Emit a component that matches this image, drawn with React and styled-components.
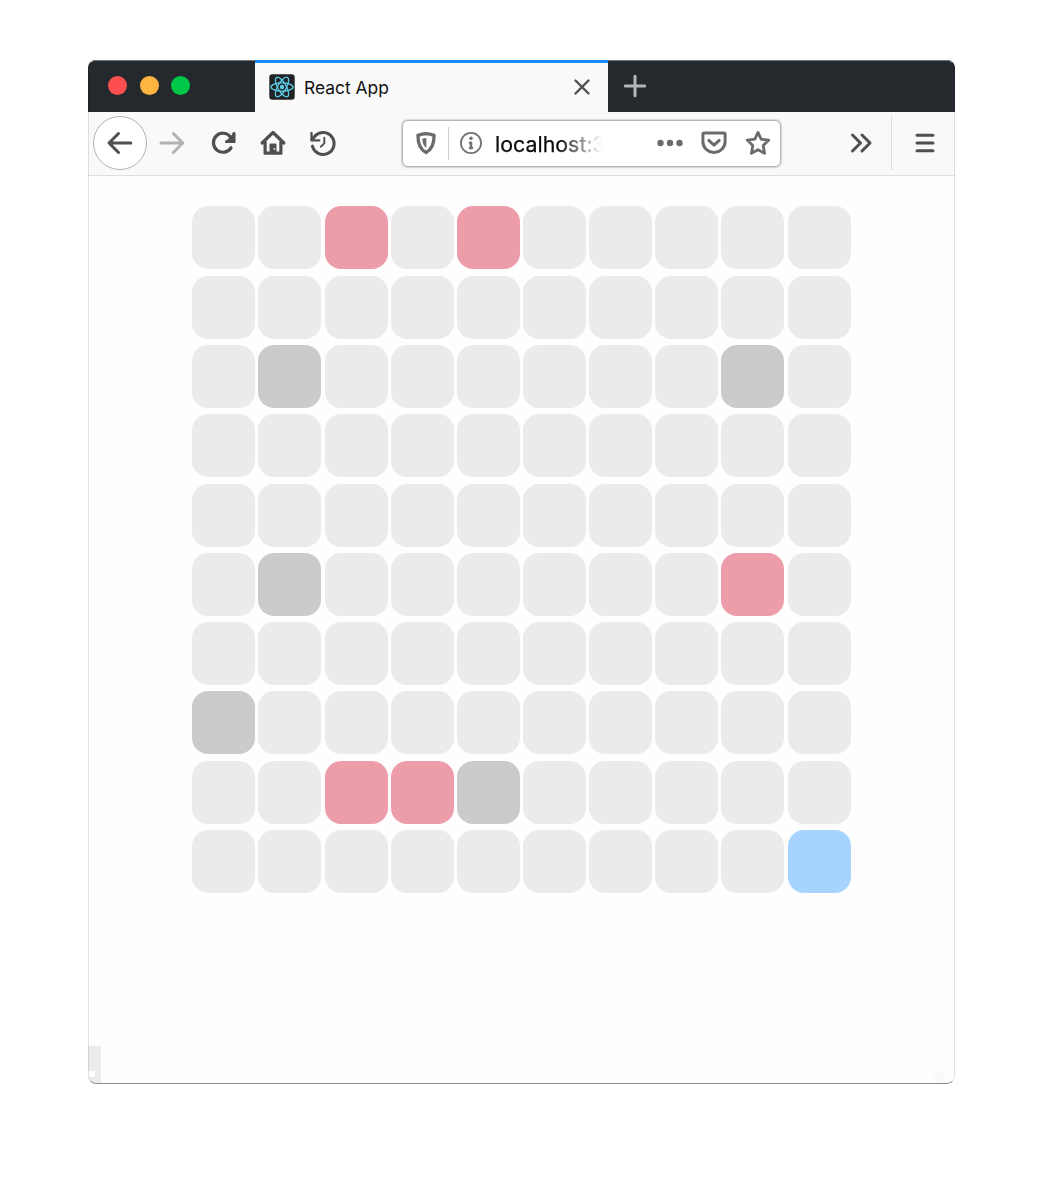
import React from "react";
import styled, { createGlobalStyle } from "styled-components";

const GlobalStyle = createGlobalStyle`
  *, *::before, *::after { box-sizing: border-box; }
  body { margin: 0; background: #fff; font-family: Inter, "Liberation Sans", sans-serif; }
`;

const Page = styled.main`
  height: 1200px;
  padding: 60px 88px 0;
`;

const Window = styled.section`
  position: relative;
  display: flex;
  flex-direction: column;
  width: 867px;
  height: 1024px;
  border-radius: 8px;
  overflow: hidden;
  background: #fefefe;

  &::after {
    content: "";
    position: absolute;
    inset: 0;
    border: 1px solid rgba(0, 0, 0, 0.11);
    border-top-color: #6f7476;
    border-bottom-color: #8c8c8c;
    border-radius: 8px;
    pointer-events: none;
  }
`;

const TabBar = styled.header`
  display: flex;
  flex: none;
  height: 52px;
  background: #24292d;
`;

const Lights = styled.div`
  display: flex;
  align-items: center;
  gap: 12.5px;
  width: 167px;
  padding: 0 0 1px 20px;
`;

const Light = styled.span`
  width: 19px;
  height: 19px;
  border-radius: 50%;
  background: ${(p) => p.$color};
`;

const Tab = styled.div`
  position: relative;
  z-index: 1;
  display: flex;
  align-items: center;
  width: 353px;
  padding: 0 10.5px 2px 14px;
  border-top: 3px solid #1c8bfa;
  background: #f9f9fa;
`;

const TabTitle = styled.span`
  flex: 1;
  margin: 2px 0 0 9px;
  font-size: 17.4px;
  line-height: 24px;
  color: #111;
`;

const NewTab = styled.div`
  display: flex;
  align-items: center;
  margin-left: 11px;
`;

const Toolbar = styled.nav`
  display: flex;
  flex: none;
  align-items: center;
  height: 64px;
  padding: 0 0 1px 5px;
  border-bottom: 1px solid #dfdfe0;
  background: #f9f9fa;
`;

const BackButton = styled.div`
  display: grid;
  flex: none;
  place-items: center;
  width: 54px;
  height: 54px;
  border: 1px solid #b3b3b3;
  border-radius: 50%;
  background: #fff;
`;

const ToolButton = styled.div`
  display: grid;
  flex: none;
  place-items: center;
  width: ${(p) => p.$width || 50}px;
`;

const UrlBar = styled.div`
  display: flex;
  flex: none;
  align-items: center;
  width: 379px;
  height: 47px;
  margin: 1px 55px 0 54px;
  padding: 0 0 1px 6.5px;
  border: 1px solid #b6b6b7;
  border-radius: 6px;
  background: #fff;
  box-shadow: 0 0 1px 0.5px rgba(0, 0, 0, 0.12), 0 1px 4px rgba(0, 0, 0, 0.05);
`;

const Divider = styled.span`
  flex: none;
  width: 1px;
  height: ${(p) => p.$height}px;
  margin: ${(p) => p.$margin};
  background: ${(p) => p.$color};
`;

const Address = styled.span`
  flex: none;
  width: 120px;
  margin: 2px 39px 0 1.5px;
  font-size: 21.4px;
  line-height: 30px;
  white-space: nowrap;
  color: #0c0c0d;
  -webkit-text-stroke: 0.25px currentColor;
  mask-image: linear-gradient(to right, #000 64px, transparent 107px);
`;

const Content = styled.div`
  position: relative;
  flex: 1;
  padding: 30.4px 0 0 104.3px;
`;

const Board = styled.div`
  display: grid;
  grid-template-columns: repeat(10, 63px);
  grid-auto-rows: 63px;
  gap: 6.3px 3.15px;
`;

const cellColors = { empty: "#ebebeb", wall: "#cbcbcb", pink: "#ed9daa", blue: "#a6d3ff" };

const Cell = styled.div`
  border-radius: 16px;
  background: ${(p) => cellColors[p.$kind]};
`;

const Status = styled.div`
  position: absolute;
  left: 0;
  bottom: 0;
  width: 13px;
  height: 38px;
  background: #ebebeb;

  &::after {
    content: "";
    position: absolute;
    left: 0;
    bottom: 7px;
    width: 7px;
    height: 6px;
    background: #fefefe;
  }
`;

const Grip = styled.div`
  position: absolute;
  right: 10px;
  bottom: 1px;
  width: 12px;
  height: 12px;
  background: #fafafa;
`;

const Glyph = styled.svg`
  display: block;
  flex: none;
  width: ${(p) => p.$size || 32}px;
  height: ${(p) => p.$size || 32}px;
  fill: none;
  stroke: ${(p) => p.$color || "#4f4f50"};
  stroke-width: ${(p) => p.$weight || 3};
  stroke-linecap: round;
  stroke-linejoin: round;
`;

function Icon({ children, ...rest }) {
  return (
    <Glyph viewBox="0 0 32 32" aria-hidden="true" {...rest}>
      {children}
    </Glyph>
  );
}

function ReactLogo() {
  return (
    <Glyph viewBox="0 0 26 26" $size={26} $color="#5fcde6" $weight={1.3} aria-hidden="true">
      <rect x="0.3" y="0.3" width="25.4" height="25.4" rx="3" fill="#202326" stroke="none" />
      <ellipse cx="13" cy="13" rx="11" ry="4.2" />
      <ellipse cx="13" cy="13" rx="11" ry="4.2" transform="rotate(60 13 13)" />
      <ellipse cx="13" cy="13" rx="11" ry="4.2" transform="rotate(120 13 13)" />
      <circle cx="13" cy="13" r="2.2" fill="#5fcde6" stroke="none" />
    </Glyph>
  );
}

const special = {
  2: "pink", 4: "pink", 21: "wall", 28: "wall", 51: "wall", 58: "pink",
  70: "wall", 82: "pink", 83: "pink", 84: "wall", 99: "blue",
};
const cells = Array.from({ length: 100 }, (_, i) => special[i] || "empty");

export default function App() {
  return (
    <Page>
      <GlobalStyle />
      <Window>
        <TabBar>
          <Lights>
            <Light $color="#fd4f50" />
            <Light $color="#fdb441" />
            <Light $color="#00c748" />
          </Lights>
          <Tab>
            <ReactLogo />
            <TabTitle>React App</TabTitle>
            <Icon $weight={2.4}>
              <path d="M9.5 9.5 22.5 22.5M22.5 9.5 9.5 22.5" />
            </Icon>
          </Tab>
          <NewTab>
            <Icon $color="#b4b7b9" $weight={3}>
              <path d="M16 6.3v19.4M6.3 16h19.4" />
            </Icon>
          </NewTab>
        </TabBar>
        <Toolbar>
          <BackButton>
            <Icon>
              <path d="M26.8 16H5.5M14.5 6.5 5 16l9.5 9.5" />
            </Icon>
          </BackButton>
          <ToolButton>
            <Icon $color="#b2b2b3">
              <path d="M5 16h21.5M17.3 6.5l9.5 9.5-9.5 9.5" />
            </Icon>
          </ToolButton>
          <ToolButton $width={51}>
            <Icon $weight={3.2}>
              <path d="M24 20.8A9.5 9.5 0 1 1 23.4 9.8" />
              <path d="M28.3 5V16H18.3V14.8L26.5 6.2Z" fill="#4f4f50" stroke="none" />
              <path d="M26.8 6.4v8h-7.2" strokeWidth="3" />
            </Icon>
          </ToolButton>
          <ToolButton>
            <Icon $weight={3.2}>
              <path d="M5.1 16 16 5.5 26.9 16M8.1 15v11.2h15.8V15" />
              <path d="M12.5 26.4v-8.7q0-1.3 1.3-1.3h4.4q1.3 0 1.3 1.3v8.7Z" fill="#4f4f50" stroke="none" />
              <circle cx="17.4" cy="21.8" r="0.9" fill="#f9f9fa" stroke="none" />
            </Icon>
          </ToolButton>
          <ToolButton>
            <Icon $weight={3.1}>
              <path d="M5.4 19.2A11 11 0 1 0 8.1 8.9L5 12.6" />
              <path d="M4.5 5.8v7.6h7.8" strokeWidth="2.3" />
              <path d="M17.3 10.8v5.6L13.8 19.7" strokeWidth="1.9" />
            </Icon>
          </ToolButton>
          <UrlBar>
            <Icon $color="#6b6b6c" $weight={3.3}>
              <path d="M16 6.6c-2.5.2-5.2.8-8.1 1.7 0 7.7 1.3 13.9 8.1 17.2 6.8-3.3 8.1-9.5 8.1-17.2-2.9-.9-5.6-1.5-8.1-1.7Z" />
              <path d="M16.3 10.9c-1.3.1-2.8.4-4 .8.2 4.6 1.2 7.2 4 9.2Z" fill="#6b6b6c" stroke="none" />
            </Icon>
            <Divider $height={33} $color="#cfcfd0" $margin="0 0 0 6px" />
            <ToolButton $width={45}>
              <Icon $color="#737374" $weight={1.8}>
                <circle cx="16" cy="16" r="10.1" />
                <circle cx="16" cy="11.3" r="1.8" fill="#737374" stroke="none" />
                <path d="M15 15.8h1v5M15 21h2" strokeWidth="2.6" />
              </Icon>
            </ToolButton>
            <Address>localhost:3</Address>
            <Icon $color="#6b6b6c">
              <g fill="#6b6b6c" stroke="none">
                <circle cx="6.5" cy="16" r="3.2" />
                <circle cx="16" cy="16" r="3.2" />
                <circle cx="25.5" cy="16" r="3.2" />
              </g>
            </Icon>
            <ToolButton $width={56}>
              <Icon $color="#6b6b6c" $weight={3}>
                <path d="M6.2 6.1h19.6q1.3 0 1.3 1.3v7.3a11.1 10.7 0 0 1-22.2 0V7.4q0-1.3 1.3-1.3Z" />
                <path d="m10.8 13.4 5.2 4.8 5.2-4.8" />
              </Icon>
            </ToolButton>
            <Icon $color="#6b6b6c" $weight={2.8}>
              <path d="m16 5.4 3.1 6.8 7.7.9-5.6 5.3 1.4 8-6.6-3.7-6.6 3.7 1.4-8-5.6-5.3 7.7-.9Z" />
            </Icon>
          </UrlBar>
          <ToolButton>
            <Icon>
              <path d="m7.5 8 8 8-8 8M17 8l8 8-8 8" />
            </Icon>
          </ToolButton>
          <Divider $height={54} $color="#dcdcdd" $margin="0 17px 0 4.5px" />
          <Icon>
            <path d="M8 8.2h16M8 16h16M8 23.8h16" />
          </Icon>
        </Toolbar>
        <Content>
          <Board>
            {cells.map((kind, i) => (
              <Cell key={i} $kind={kind} />
            ))}
          </Board>
          <Status />
          <Grip />
        </Content>
      </Window>
    </Page>
  );
}
